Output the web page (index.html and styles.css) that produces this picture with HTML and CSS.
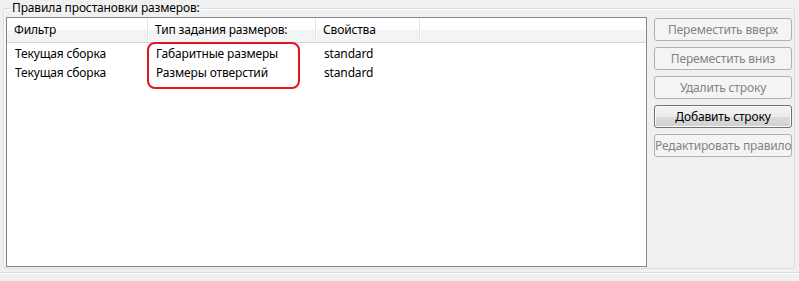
FILE: index.html
```html
<!DOCTYPE html>
<html lang="ru">
<head>
<meta charset="utf-8">
<link rel="stylesheet" href="styles.css">
</head>
<body>
<div class="page">
  <fieldset class="group">
    <legend class="group-title">Правила простановки размеров:</legend>
    <div class="content">
      <div class="table">
        <div class="thead">
          <div class="th c1">Фильтр</div>
          <div class="th c2">Тип задания размеров:</div>
          <div class="th c3">Свойства</div>
          <div class="th c4"></div>
        </div>
        <div class="tbody">
          <div class="tr">
            <div class="td c1">Текущая сборка</div>
            <div class="td c2">Габаритные размеры</div>
            <div class="td c3">standard</div>
          </div>
          <div class="tr">
            <div class="td c1">Текущая сборка</div>
            <div class="td c2">Размеры отверстий</div>
            <div class="td c3">standard</div>
          </div>
          <div class="highlight"></div>
        </div>
      </div>
      <div class="buttons">
        <button class="btn" disabled>Переместить вверх</button>
        <button class="btn" disabled>Переместить вниз</button>
        <button class="btn" disabled>Удалить строку</button>
        <button class="btn primary">Добавить строку</button>
        <button class="btn" disabled>Редактировать правило</button>
      </div>
    </div>
  </fieldset>
  <div class="bottom-line"></div>
</div>
</body>
</html>
```
FILE: styles.css
```css
html, body {
  margin: 0;
  padding: 0;
  background: #f0f0f0;
  font-family: "Noto Sans", "Open Sans", sans-serif;
  font-size: 12px;
  letter-spacing: -0.15px;
  color: #000;
}
.page {
  width: 799px;
  height: 281px;
  overflow: hidden;
}
.group {
  margin: 0 0 0 3px;
  width: 792px;
  height: 269px;
  box-sizing: border-box;
  border: 1px solid #d5dfe5;
  border-radius: 3px;
  padding: 1px 2px 0 2px;
  box-shadow: inset 1px 1px 0 #fff;
}
.group-title {
  padding: 0 1px;
  margin-left: 5px;
  line-height: 16px;
  height: 16px;
  color: #000;
}
.content {
  display: flex;
  gap: 7px;
}
.table {
  width: 641px;
  height: 250px;
  box-sizing: border-box;
  border: 1px solid #828790;
  background: #fff;
  display: flex;
  flex-direction: column;
}
.thead {
  display: flex;
  height: 25px;
  box-sizing: border-box;
  border-bottom: 1px solid #d5d5d5;
  background: linear-gradient(#ffffff 0, #ffffff 50%, #f3f4f6 50%, #f3f4f6 100%);
}
.th {
  box-sizing: border-box;
  padding-left: 7px;
  line-height: 24px;
  border-right: 1px solid #e5e5e5;
  box-shadow: 1px 0 0 #fff;
  white-space: nowrap;
}
.c1 { width: 141px; }
.c2 { width: 168px; }
.c3 { width: 104px; }
.th.c4 { width: 0; border-right: 0; box-shadow: none; }
.tbody {
  position: relative;
  flex: 1;
  padding-top: 1px;
}
.tr {
  display: flex;
  height: 19px;
}
.td {
  box-sizing: border-box;
  padding-left: 8px;
  line-height: 19px;
  white-space: nowrap;
}
.highlight {
  position: absolute;
  left: 140px;
  top: -1px;
  width: 153px;
  height: 47px;
  box-sizing: border-box;
  border: 2px solid #e3141f;
  border-radius: 8px;
}
.buttons {
  display: flex;
  flex-direction: column;
  gap: 6px;
  padding-top: 1px;
}
.btn {
  width: 138px;
  height: 23px;
  box-sizing: border-box;
  border: 1px solid #adb2b5;
  border-radius: 3px;
  background: #f4f4f4;
  color: #838383;
  font-family: inherit;
  font-size: 12px;
  letter-spacing: -0.15px;
  white-space: nowrap;
  overflow: hidden;
  padding: 0;
  margin: 0;
}
.btn.primary {
  border-color: #707070;
  color: #000;
  background: linear-gradient(#f2f2f2 0, #ebebeb 50%, #dddddd 50%, #cfcfcf 100%);
  box-shadow: inset 0 0 0 1px #fcfcfc;
}
.bottom-line {
  margin-top: 3px;
  height: 1px;
  background: #d5dfe5;
  border-bottom: 1px solid #fff;
}
```
